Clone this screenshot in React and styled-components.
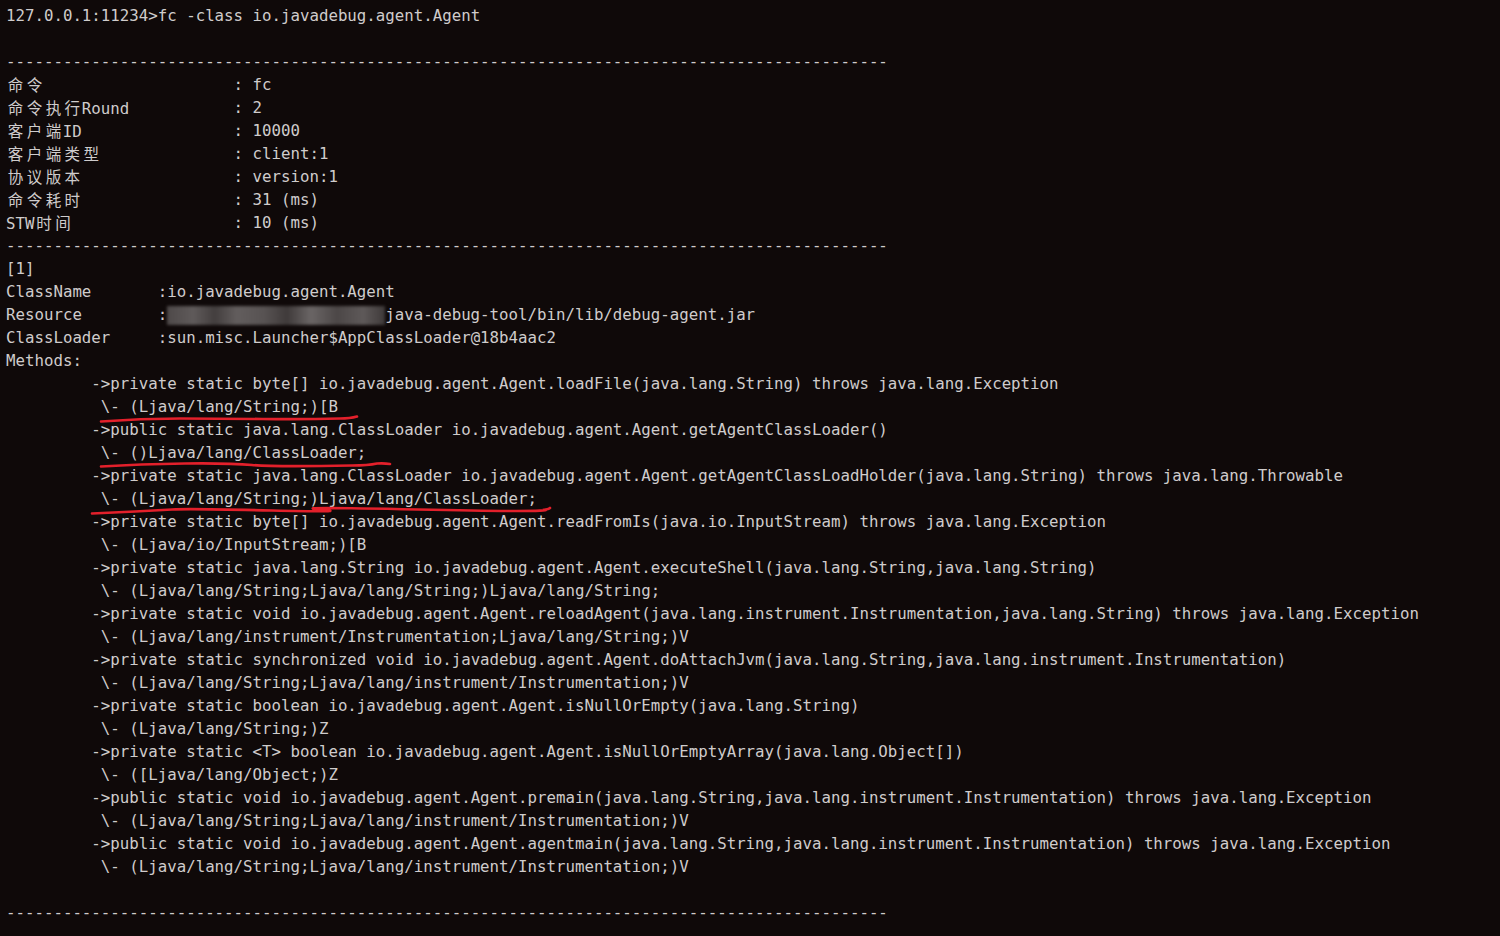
import React from "react";
import styled, { createGlobalStyle } from "styled-components";

const GlobalStyle = createGlobalStyle`
  html, body {
    margin: 0;
    background: #0f0909;
  }
`;

const Screen = styled.div`
  position: relative;
  min-height: 100vh;
  box-sizing: border-box;
  padding: 4px 0 0 6px;
  background: #0f0909;
  color: #cfcccc;
  font-family: "DejaVu Sans Mono", "Liberation Mono", monospace;
  font-size: 15.75px;
  overflow: hidden;
`;

const Line = styled.div`
  height: 23px;
  line-height: 23px;
  white-space: pre;
`;

const Field = styled.div`
  display: grid;
  grid-template-columns: 24ch auto;
  height: 23px;
  line-height: 23px;
  white-space: pre;
`;

// one CJK char fills two terminal cells (2 x 9.48px)
const Wide = styled.span`
  display: inline-block;
  width: 18.96px;
  text-align: center;
  font-family: "Noto Sans CJK SC", "DejaVu Sans", sans-serif;
  font-size: 15.5px;
`;

const Redacted = styled.span`
  display: inline-block;
  width: 23ch;
  height: 19px;
  vertical-align: -5px;
  background: linear-gradient(
    90deg,
    #4e4949 0%,
    #5f5a5a 12%,
    #433e3e 22%,
    #625d5d 32%,
    #575252 45%,
    #3f3a3a 55%,
    #6a6565 66%,
    #4c4747 78%,
    #5e5959 90%,
    #3e3939 100%
  );
  filter: blur(1.5px);
`;

const Marks = styled.svg`
  position: absolute;
  top: 0;
  left: 0;
  width: 1500px;
  height: 936px;
  pointer-events: none;
`;

const rule = "-".repeat(93);

const fields = [
  ["命令", "fc"],
  ["命令执行Round", "2"],
  ["客户端ID", "10000"],
  ["客户端类型", "client:1"],
  ["协议版本", "version:1"],
  ["命令耗时", "31 (ms)"],
  ["STW时间", "10 (ms)"],
];

const methods = [
  ["private static byte[] io.javadebug.agent.Agent.loadFile(java.lang.String) throws java.lang.Exception", "(Ljava/lang/String;)[B"],
  ["public static java.lang.ClassLoader io.javadebug.agent.Agent.getAgentClassLoader()", "()Ljava/lang/ClassLoader;"],
  ["private static java.lang.ClassLoader io.javadebug.agent.Agent.getAgentClassLoadHolder(java.lang.String) throws java.lang.Throwable", "(Ljava/lang/String;)Ljava/lang/ClassLoader;"],
  ["private static byte[] io.javadebug.agent.Agent.readFromIs(java.io.InputStream) throws java.lang.Exception", "(Ljava/io/InputStream;)[B"],
  ["private static java.lang.String io.javadebug.agent.Agent.executeShell(java.lang.String,java.lang.String)", "(Ljava/lang/String;Ljava/lang/String;)Ljava/lang/String;"],
  ["private static void io.javadebug.agent.Agent.reloadAgent(java.lang.instrument.Instrumentation,java.lang.String) throws java.lang.Exception", "(Ljava/lang/instrument/Instrumentation;Ljava/lang/String;)V"],
  ["private static synchronized void io.javadebug.agent.Agent.doAttachJvm(java.lang.String,java.lang.instrument.Instrumentation)", "(Ljava/lang/String;Ljava/lang/instrument/Instrumentation;)V"],
  ["private static boolean io.javadebug.agent.Agent.isNullOrEmpty(java.lang.String)", "(Ljava/lang/String;)Z"],
  ["private static <T> boolean io.javadebug.agent.Agent.isNullOrEmptyArray(java.lang.Object[])", "([Ljava/lang/Object;)Z"],
  ["public static void io.javadebug.agent.Agent.premain(java.lang.String,java.lang.instrument.Instrumentation) throws java.lang.Exception", "(Ljava/lang/String;Ljava/lang/instrument/Instrumentation;)V"],
  ["public static void io.javadebug.agent.Agent.agentmain(java.lang.String,java.lang.instrument.Instrumentation) throws java.lang.Exception", "(Ljava/lang/String;Ljava/lang/instrument/Instrumentation;)V"],
];

const cells = (text) =>
  text.split(/([\u4e00-\u9fff])/).map((part, i) =>
    /[\u4e00-\u9fff]/.test(part) ? <Wide key={i}>{part}</Wide> : part
  );

const App = () => {
  return (
    <>
      <GlobalStyle />
      <Screen>
        <Line>127.0.0.1:11234&gt;fc -class io.javadebug.agent.Agent</Line>
        <Line />
        <Line>{rule}</Line>
        {fields.map(([k, v]) => (
          <Field key={k}>
            <span>{cells(k)}</span>
            <span>: {v}</span>
          </Field>
        ))}
        <Line>{rule}</Line>
        <Line>[1]</Line>
        <Line>ClassName       :io.javadebug.agent.Agent</Line>
        <Line>
          Resource        :<Redacted />java-debug-tool/bin/lib/debug-agent.jar
        </Line>
        <Line>ClassLoader     :sun.misc.Launcher$AppClassLoader@18b4aac2</Line>
        <Line>Methods:</Line>
        {methods.map(([sig, desc]) => (
          <React.Fragment key={sig}>
            <Line>{"         ->" + sig}</Line>
            <Line>{"          \\- " + desc}</Line>
          </React.Fragment>
        ))}
        <Line />
        <Line>{rule}</Line>

        <Marks viewBox="0 0 1500 936">
          <g fill="none" stroke="#e3202b" strokeWidth="2.6" strokeLinecap="round">
            <path d="M101 421.5 Q140 418.5 180 418.5 T262 419 T340 418.5 Q350 418.5 357 416.5" />
            <path d="M101 466.5 Q140 464 185 463.5 T252 465 T352 465.5 Q368 465.5 377 463.5 Q384 463 390 464" />
            <path d="M92 513.5 Q115 512.5 135 511.5 T172 509.5 T272 510.5 T320 509.5 T418 509.5 T546 509.5 Q549 509 550 508" />
          </g>
        </Marks>
      </Screen>
    </>
  );
};

export default App;
